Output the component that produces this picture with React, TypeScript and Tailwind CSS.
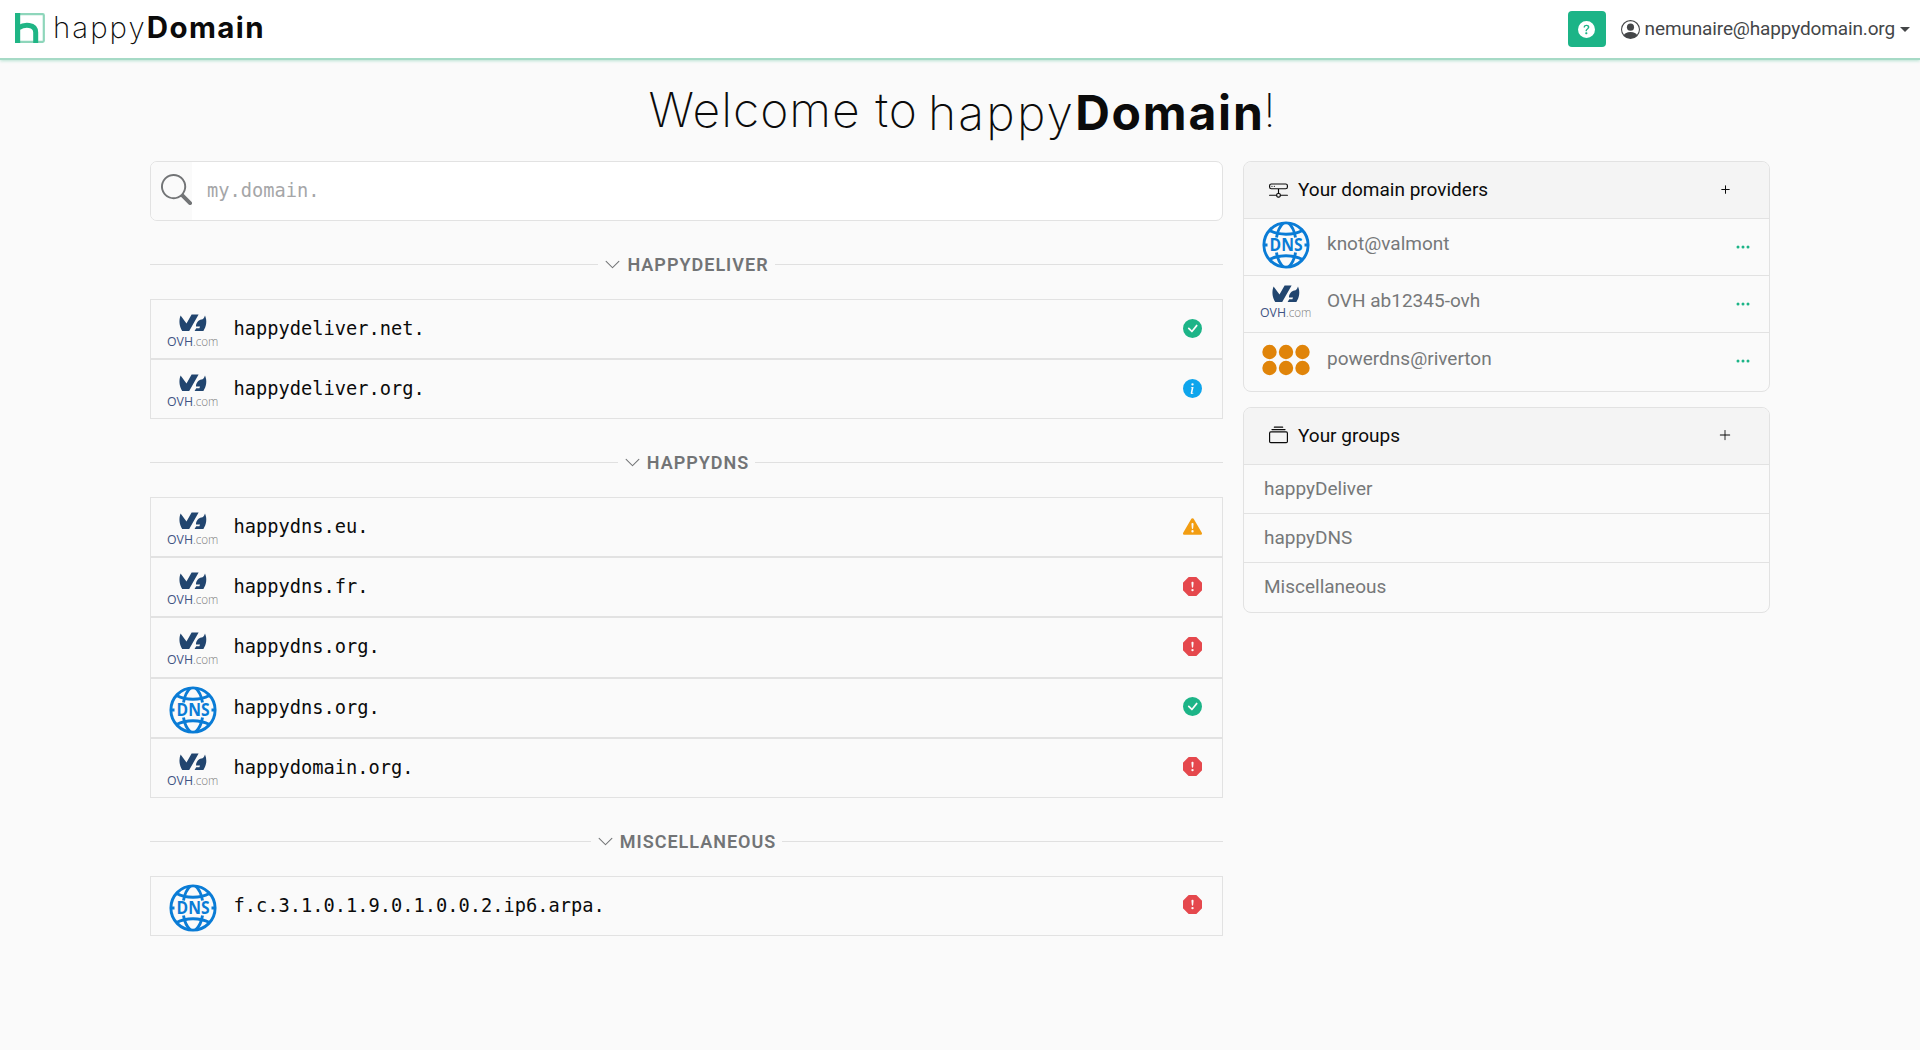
import {
  BsCheckCircleFill,
  BsChevronDown,
  BsCollection,
  BsExclamationOctagonFill,
  BsExclamationTriangleFill,
  BsHddNetwork,
  BsInfoCircleFill,
  BsPersonCircle,
  BsPlus,
  BsPlusLg,
  BsQuestionCircleFill,
  BsSearch,
  BsThreeDots,
} from 'react-icons/bs';

type Provider = 'ovh' | 'dns' | 'powerdns';
type Status = 'ok' | 'info' | 'warning' | 'error';

const groups: { name: string; domains: { name: string; provider: Provider; status: Status }[] }[] = [
  {
    name: 'happyDeliver',
    domains: [
      { name: 'happydeliver.net.', provider: 'ovh', status: 'ok' },
      { name: 'happydeliver.org.', provider: 'ovh', status: 'info' },
    ],
  },
  {
    name: 'happyDNS',
    domains: [
      { name: 'happydns.eu.', provider: 'ovh', status: 'warning' },
      { name: 'happydns.fr.', provider: 'ovh', status: 'error' },
      { name: 'happydns.org.', provider: 'ovh', status: 'error' },
      { name: 'happydns.org.', provider: 'dns', status: 'ok' },
      { name: 'happydomain.org.', provider: 'ovh', status: 'error' },
    ],
  },
  {
    name: 'Miscellaneous',
    domains: [{ name: 'f.c.3.1.0.1.9.0.1.0.0.2.ip6.arpa.', provider: 'dns', status: 'error' }],
  },
];

const providers: { name: string; kind: Provider }[] = [
  { name: 'knot@valmont', kind: 'dns' },
  { name: 'OVH ab12345-ovh', kind: 'ovh' },
  { name: 'powerdns@riverton', kind: 'powerdns' },
];

function AppLogo() {
  return (
    <svg viewBox="0 0 30 30" className="w-[30px] h-[30px] mt-[1px]">
      <rect x="1.2" y="1.2" width="27.6" height="27.6" rx="1" fill="none" stroke="#8ed6bb" strokeWidth="2.2" />
      <path d="M2.6 0V30" stroke="#1fb585" strokeWidth="5.2" />
      <path d="M4 14.5C9 11.5 20.7 10.5 20.7 19.5V30" fill="none" stroke="#1fb585" strokeWidth="5" />
    </svg>
  );
}

function OvhLogo() {
  return (
    <svg viewBox="0 0 52 38" className="w-[52px] h-[38px] overflow-visible">
      <path d="M13.6 3.5L19.5 11.5L24.6 2.6H31.6L22.2 19H15.2C12 14 11.8 8 13.6 3.5Z" fill="#21456f" />
      <path d="M34 7.5C35.6 8 37 6.4 38 3.5C40.2 8.5 39.6 14 36.4 19H27.6L29.2 16.2H32.4L33 14.6H29C28.8 11.6 31 8.4 34 7.5Z" fill="#21456f" />
      <text x="0" y="34" fontFamily="'Open Sans'" fontSize="12.6" textLength="26" lengthAdjust="spacingAndGlyphs" fill="#3f5484">
        OVH
      </text>
      <text x="26" y="34" fontFamily="'Open Sans'" fontWeight="300" fontSize="12.6" textLength="25.4" lengthAdjust="spacingAndGlyphs" fill="#808080">
        .com
      </text>
    </svg>
  );
}

function DnsLogo() {
  return (
    <svg viewBox="0 0 48 48" className="w-[48px] h-[48px]">
      <g fill="none" stroke="#0a7cd6" strokeWidth="2.9">
        <circle cx="24" cy="24" r="22.1" />
        <path d="M7.5 9.5C17 14.5 31 14.5 40.5 9.5M7.5 38.5C17 33.5 31 33.5 40.5 38.5" />
        <path d="M14.5 16.5C15.5 10.5 18 5 21.5 2M33.5 16.5C32.5 10.5 30 5 26.5 2" />
        <path d="M14.5 31.5C15.5 37.5 18 43 21.5 46M33.5 31.5C32.5 37.5 30 43 26.5 46" />
        <path d="M2 24H5.5M42.5 24H46" />
      </g>
      <text x="7.6" y="30.2" fontFamily="'Open Sans'" fontWeight="700" fontSize="17" textLength="33" lengthAdjust="spacingAndGlyphs" fill="#0a7cd6">
        DNS
      </text>
    </svg>
  );
}

function PowerDnsLogo() {
  return (
    <svg viewBox="0 0 48 32" className="w-[48px] h-[32px]" fill="#e08409">
      <circle cx="7.5" cy="8" r="7.2" />
      <circle cx="24" cy="8" r="7.2" />
      <circle cx="40.5" cy="8" r="7.2" />
      <circle cx="7.5" cy="24" r="7.2" />
      <circle cx="24" cy="24" r="7.2" />
      <circle cx="40.5" cy="24" r="7.2" />
    </svg>
  );
}

function ProviderLogo({ kind }: { kind: Provider }) {
  if (kind === 'ovh') return <OvhLogo />;
  if (kind === 'dns') return <DnsLogo />;
  return <PowerDnsLogo />;
}

function StatusIcon({ status }: { status: Status }) {
  if (status === 'ok') return <BsCheckCircleFill className="w-[19px] h-[19px] text-[#1cb487]" />;
  if (status === 'info') return <BsInfoCircleFill className="w-[19px] h-[19px] text-[#0ea5ec]" />;
  if (status === 'warning') return <BsExclamationTriangleFill className="w-[19px] h-[19px] text-[#f29d12]" />;
  return <BsExclamationOctagonFill className="w-[19px] h-[19px] text-[#e5484d]" />;
}

function GroupTitle({ name }: { name: string }) {
  return (
    <div className="h-[78px] pt-[9px] flex items-center">
      <div className="flex-1 h-[1.3px] bg-[#e0e0e0]" />
      <h3 className="flex items-center px-[6px] text-[18px] font-semibold tracking-[1px] uppercase text-[#727476]">
        <BsChevronDown className="w-[17px] h-[17px] mr-[6px]" />
        {name}
      </h3>
      <div className="flex-1 h-[1.3px] bg-[#e0e0e0]" />
    </div>
  );
}

export default function App() {
  return (
    <div className="min-h-[1050px] bg-[#fafafa] font-[Roboto,sans-serif] text-[19px] text-[#0b0b0b]">
      <header className="h-[60px] pl-[15px] pr-[10px] flex items-center justify-between bg-white border-b-2 border-[#a6dac6] shadow-[0_1px_3px_#b9e3d3]">
        <div className="flex items-center pb-[3px]">
          <AppLogo />
          <div className="ml-[8px] pb-[2px] font-[Inter,sans-serif] text-[29.5px] leading-[40px] flex">
            <span className="font-extralight tracking-[2px]">happy</span>
            <span className="font-bold tracking-[1.4px]">Domain</span>
          </div>
        </div>
        <div className="flex items-center text-[#444648]">
          <button className="w-[38px] h-[36px] rounded-[4px] bg-[#1cb487] flex items-center justify-center text-white">
            <BsQuestionCircleFill className="w-[17px] h-[17px]" />
          </button>
          <BsPersonCircle className="w-[19px] h-[19px] ml-[15px] mr-[5px]" />
          <span className="tracking-[-0.14px]">nemunaire@happydomain.org</span>
          <svg viewBox="0 0 10 5" className="w-[10px] h-[5px] ml-[5px]">
            <path d="M0 0H10L5 5Z" fill="currentColor" />
          </svg>
        </div>
      </header>

      <h1 className="h-[101px] pl-[3px] flex justify-center font-[Inter,sans-serif] text-[48px] leading-[99px] font-extralight">
        <span className="tracking-[1px]">Welcome to</span>
        <span className="ml-[10px] pt-[3px] flex">
          <span className="tracking-[2.2px]">happy</span>
          <span className="font-bold tracking-[1.8px]">Domain</span>
        </span>
        <span className="pt-[1px] font-[Roboto,sans-serif]">!</span>
      </h1>

      <main className="pl-[150px] pr-[150px] flex items-start gap-[20px]">
        <section className="w-[1073px]">
          <div className="h-[60px] flex rounded-[7px] border border-[#e2e2e2] overflow-hidden bg-white">
            <div className="w-[41px] pl-[10px] pt-[12px] bg-[#fafafa]">
              <BsSearch className="w-[31px] h-[31px] text-[#727476]" />
            </div>
            <input
              type="text"
              placeholder="my.domain."
              className="flex-1 pl-[15px] font-['DejaVu_Sans_Mono',monospace] text-[18.7px] placeholder-[#a5a6a8] outline-none"
            />
          </div>

          {groups.map((group) => (
            <div key={group.name}>
              <GroupTitle name={group.name} />
              <div>
                {group.domains.map((domain, i) => (
                  <div key={i} className="h-[60.12px] flex items-center pl-[16px] pr-[20px] border border-[#e2e2e2]">
                    <div className="w-[52px] mr-[14.5px] pt-[4px] flex justify-center">
                      <ProviderLogo kind={domain.provider} />
                    </div>
                    <span className="flex-1 font-['DejaVu_Sans_Mono',monospace] text-[18.7px]">{domain.name}</span>
                    <div className="pb-[2px]">
                      <StatusIcon status={domain.status} />
                    </div>
                  </div>
                ))}
              </div>
            </div>
          ))}
        </section>

        <aside className="flex-1">
          <div className="rounded-[8px] border border-[#e2e2e2] overflow-hidden">
            <div className="h-[57px] pl-[25px] pr-[35px] flex items-center bg-[#f4f4f4] border-b border-[#e2e2e2]">
              <BsHddNetwork className="w-[19px] h-[19px] mr-[10px]" />
              <span className="flex-1">Your domain providers</span>
              <BsPlus className="w-[17px] h-[17px] mb-[1px]" />
            </div>
            {providers.map((provider) => (
              <div
                key={provider.name}
                className="h-[57.2px] flex items-center pl-[16px] pr-[18px] border-b border-[#e2e2e2] last:border-b-0"
              >
                <div className="w-[52px] mr-[15px] pb-[4px] flex justify-center">
                  <ProviderLogo kind={provider.kind} />
                </div>
                <span className="flex-1 pb-[6px] text-[#767879]">{provider.name}</span>
                <BsThreeDots className="w-[16px] h-[16px] mb-[1px] text-[#1cb487]" />
              </div>
            ))}
          </div>

          <div className="mt-[15px] rounded-[8px] border border-[#e2e2e2] overflow-hidden">
            <div className="h-[57px] pt-[1px] pl-[25px] pr-[37px] flex items-center bg-[#f4f4f4] border-b border-[#e2e2e2]">
              <BsCollection className="w-[19px] h-[19px] mr-[10px] mb-[2px]" />
              <span className="flex-1">Your groups</span>
              <BsPlusLg className="w-[14px] h-[14px] mb-[2px]" />
            </div>
            {groups.map((group) => (
              <div
                key={group.name}
                className="h-[49px] pt-[1px] flex items-center pl-[20px] border-b border-[#e2e2e2] last:border-b-0 text-[#767879]"
              >
                {group.name}
              </div>
            ))}
          </div>
        </aside>
      </main>
    </div>
  );
}
